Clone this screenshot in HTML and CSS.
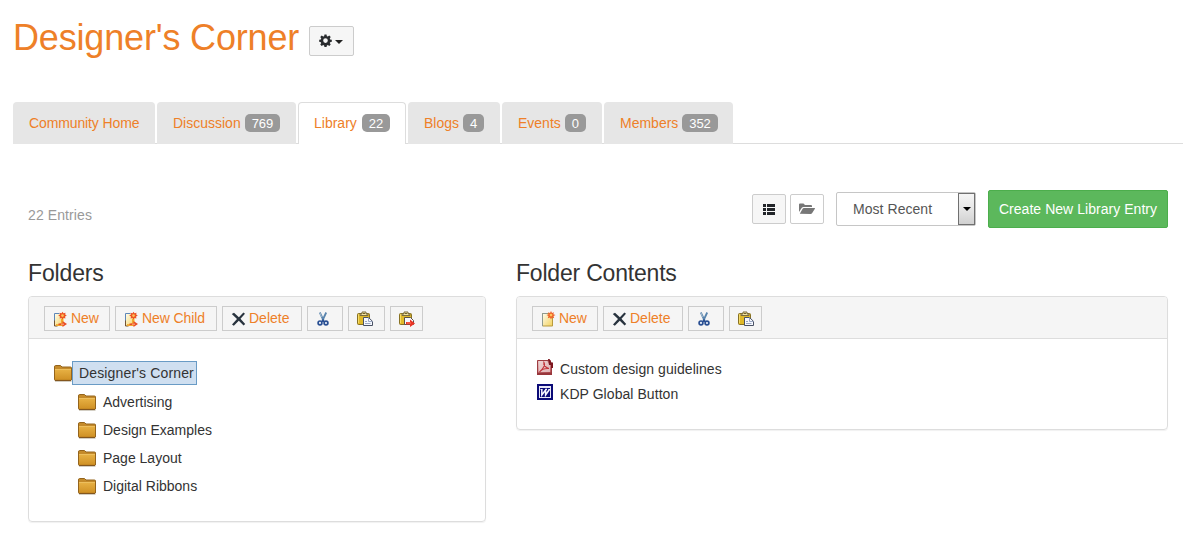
FILE: index.html
```html
<!DOCTYPE html>
<html lang="en">
<head>
<meta charset="utf-8">
<title>Designer's Corner</title>
<link rel="stylesheet" href="styles.css">
</head>
<body>
<svg class="sprite" aria-hidden="true">
  <defs>
    <linearGradient id="gold" x1="0" y1="0" x2="0" y2="1"><stop offset="0" stop-color="#e8b245"/><stop offset="1" stop-color="#cf9024"/></linearGradient>
    <linearGradient id="sheet" x1="0" y1="0" x2="1" y2="1"><stop offset="0" stop-color="#fffdf0"/><stop offset="1" stop-color="#f3d25c"/></linearGradient>
    <linearGradient id="red" x1="0" y1="0" x2="1" y2="1"><stop offset="0" stop-color="#eccccc"/><stop offset="1" stop-color="#b5484d"/></linearGradient>
  </defs>
  <symbol id="folder" viewBox="0 0 18 17">
    <path d="M1 16.300h16.500" stroke="#c9c2b4"/>
    <path d="M.5 14.500V2Q.5.500 1.500.500h5l1.500 1.500h8.500Q17.500 2 17.500 3v12h-17z" fill="#c48a2a" stroke="#94641c"/>
    <path d="M1 4h16v11H1z" fill="url(#gold)"/>
    <path d="M1 4.500h16" stroke="#edbf5e"/>
    <path d="M1 15.400h16" stroke="#7c4d12"/>
  </symbol>
  <symbol id="new-doc" viewBox="0 0 16 16">
    <path d="M2.500 2.500h7L12.500 6v9h-10z" fill="url(#sheet)" stroke="#b99b3c"/>
    <path d="M2.500 15V2.500h5" fill="none" stroke="#8e9a91"/>
    <path d="M11 0l1 2 2-.8-.7 2L15.500 4l-2 1 .7 2.200-2.200-.7L11 8.500l-1-2-2.200.7.7-2.200-2-1 2.200-.8-.7-2L10 2z" fill="#ee6127"/>
    <circle cx="11" cy="4.100" r="1.400" fill="#ffc35b"/>
  </symbol>
  <symbol id="new-folder" viewBox="0 0 16 16">
    <path d="M2.500 2.500h7L12 6v9H2.500z" fill="url(#sheet)"/>
    <path d="M2.500 11V2.500h5" fill="none" stroke="#5d86b8"/>
    <path d="M2.500 9.500v5.500h3" fill="none" stroke="#705232"/>
    <path d="M4 13q3 1 5-1v-4l2-1v8H4z" fill="#f2a72d"/>
    <path d="M10.500.800l1 1.500 2-.5-.3 1.800 1.600 1-1.700 1 .3 1.800-1.900-.5-1 1.600-1-1.600-1.900.5.400-1.800-1.800-1 1.800-1-.4-1.800 1.900.5z" fill="#ed5526"/>
    <circle cx="10.500" cy="4.600" r="1.300" fill="#ffc457"/>
    <path d="M6.500 12.500h4V10l4.500 3-4.500 3v-2h-4z" fill="#e84c25"/>
    <path d="M9 13.200h3" stroke="#ffb27f"/>
  </symbol>
  <symbol id="delete" viewBox="0 0 16 16">
    <path d="M.8 3l2.200-1.200 4.900 4.500L12.400 1.500 14 2.800 9.500 7.800l4.700 5.200-1.600 1.500L7.800 9.800 2.800 14.800 1 13.400 6 8z" fill="#28333e"/>
  </symbol>
  <symbol id="cut" viewBox="0 0 16 16">
    <path d="M4.800 1.500l4 8.500M11.200 1.500L7.200 10" stroke="#5984ad" stroke-width="1.800" fill="none"/>
    <path d="M5 2l1.500 4" stroke="#a7bdd0"/>
    <circle cx="5" cy="11.900" r="1.900" fill="#eef3fa" stroke="#294f93" stroke-width="1.700"/>
    <circle cx="11" cy="12" r="1.900" fill="#eef3fa" stroke="#294f93" stroke-width="1.700"/>
    <path d="M7 8.500h2V11H7z" fill="#294f93"/>
  </symbol>
  <symbol id="clip" viewBox="0 0 16 16">
    <rect x=".5" y="2.500" width="12" height="11" rx="1" fill="#e0b929" stroke="#877123"/>
    <path d="M1.500 12V3.500h2" stroke="#f5db68" fill="none"/>
    <path d="M3 4.500V3h2V1h4v2h2v1.500z" fill="#f4e6a4" stroke="#786b3f"/>
    <path d="M6 2.500h2" stroke="#746228"/>
  </symbol>
  <symbol id="paste" viewBox="0 0 16 16">
    <use href="#clip"/>
    <path d="M6.500 6.500h5l4 3.800v4.200h-9z" fill="#f5f8ff" stroke="#4a5264"/>
    <path d="M11.500 6.500v4h4M8 10.500h2M8 12.500h5.500" fill="none" stroke="#9aa7c2"/>
  </symbol>
  <symbol id="paste-child" viewBox="0 0 16 16">
    <use href="#clip"/>
    <path d="M5.500 6.500h6l3 3v4h-9z" fill="#f5f8ff" stroke="#5c5146"/>
    <path d="M7 11h4V8.500l5 4-5 3.500v-2.500H7z" fill="#e93425"/>
    <path d="M8 12h4" stroke="#ff795d"/>
  </symbol>
  <symbol id="pdf" viewBox="0 0 16 16">
    <path d="M0 1h14v15H0z" fill="url(#red)"/>
    <path d="M.5 1.500h11l3 3v11H.5z" fill="none" stroke="#9e3d42"/>
    <path d="M0 13.500h15V16H0z" fill="#98363b"/>
    <path d="M2 2h8l3 4v7H2z" fill="#f0dcdc" fill-opacity=".7"/>
    <path d="M6.500 2.500q2 3 .2 5.500-1.700 3-4.200 5 3-4 9.500-3.500-4-.8-5.500-5" fill="none" stroke="#c2333a" stroke-width="1.100"/>
    <path d="M11 0h1.500l2 3.500H16V9h-2V6h-2z" fill="#7d171f"/>
  </symbol>
  <symbol id="word" viewBox="0 0 16 16">
    <path d="M0 0h16v16H0z" fill="#0b0b78"/>
    <path d="M2 2h12v2H2zM2 4h1v9H2zM13 4h1v9h-1zM2 13h12v1H2z" fill="#e8e8f6"/>
    <path d="M3.500 5.500h2M8 5.500h2M11.500 5.500h2" stroke="#f5f5ff"/>
    <path d="M4.800 5.500v5.500L8.600 6v5L12.400 5.500" fill="none" stroke="#f5f5ff" stroke-width="1.500"/>
  </symbol>
</svg>

<main class="page">
  <header class="title-row">
    <h1 class="title">Designer's Corner</h1>
    <button class="settings" aria-label="Settings">
      <svg width="13" height="13" viewBox="0 0 14 14"><path fill="#292b2e" fill-rule="evenodd" d="M5.900.500h2.200l.4 1.800 1 .4 1.600-1 1.500 1.500-1 1.600.4 1 1.800.4v2.200l-1.800.4-.4 1 1 1.600-1.500 1.500-1.600-1-1 .4-.4 1.800H5.900l-.4-1.800-1-.4-1.600 1-1.500-1.500 1-1.600-.4-1L.2 8.400V6.200L2 5.800l.4-1-1-1.600 1.500-1.500 1.600 1 1-.4zM7 4.600a2.500 2.500 0 1 0 0 5 2.500 2.500 0 0 0 0-5z"/></svg>
      <span class="caret"></span>
    </button>
  </header>

  <nav class="tabs">
    <a class="tab tab-home">Community Home</a>
    <a class="tab tab-discussion">Discussion<span class="badge">769</span></a>
    <a class="tab tab-library active">Library<span class="badge">22</span></a>
    <a class="tab tab-blogs">Blogs<span class="badge">4</span></a>
    <a class="tab tab-events">Events<span class="badge">0</span></a>
    <a class="tab tab-members">Members<span class="badge">352</span></a>
  </nav>

  <section class="controls">
    <span class="count">22 Entries</span>
    <button class="view view-on" aria-label="List view"><svg width="12" height="11" viewBox="0 0 12 11"><path fill="#222529" d="M0 0h3v3H0zM4 0h8v3H4zM0 4h3v3H0zM4 4h8v3H4zM0 8h3v3H0zM4 8h8v3H4z"/></svg></button>
    <button class="view" aria-label="Folder view"><svg width="16" height="12" viewBox="0 0 16 12"><path fill="#777" d="M0 9V1.500Q0 .5 1 .5h3.500l1.500 1.500h6q1 0 1 1v1H4.500q-1 0-1.700.8zM.8 10.800L3.500 6q.5-1 1.500-1h10.500q.8 0 .4.800L13.200 10q-.6 1-1.600 1z"/></svg></button>
    <div class="select"><span class="select-text">Most Recent</span><span class="select-arrow"><i class="caret"></i></span></div>
    <button class="create">Create New Library Entry</button>
  </section>

  <div class="columns">
    <section class="folders">
      <h2 class="heading">Folders</h2>
      <div class="panel panel-folders">
        <div class="toolbar">
          <button class="tool w-new"><svg class="ico"><use href="#new-folder"/></svg><span class="label">New</span></button>
          <button class="tool w-child"><svg class="ico"><use href="#new-folder"/></svg><span class="label">New Child</span></button>
          <button class="tool w-delete"><svg class="ico"><use href="#delete"/></svg><span class="label">Delete</span></button>
          <button class="tool w-cut" aria-label="Cut"><svg class="ico"><use href="#cut"/></svg></button>
          <button class="tool w-paste" aria-label="Paste"><svg class="ico"><use href="#paste"/></svg></button>
          <button class="tool w-last" aria-label="Paste as child"><svg class="ico"><use href="#paste-child"/></svg></button>
        </div>
        <div class="tree">
          <div class="root"><svg class="folder"><use href="#folder"/></svg><span class="selected">Designer's Corner</span></div>
          <div class="node"><svg class="folder"><use href="#folder"/></svg>Advertising</div>
          <div class="node"><svg class="folder"><use href="#folder"/></svg>Design Examples</div>
          <div class="node"><svg class="folder"><use href="#folder"/></svg>Page Layout</div>
          <div class="node"><svg class="folder"><use href="#folder"/></svg>Digital Ribbons</div>
        </div>
      </div>
    </section>
    <section class="contents">
      <h2 class="heading heading-contents">Folder Contents</h2>
      <div class="panel panel-contents">
        <div class="toolbar">
          <button class="tool w-new"><svg class="ico"><use href="#new-doc"/></svg><span class="label">New</span></button>
          <button class="tool w-delete"><svg class="ico"><use href="#delete"/></svg><span class="label">Delete</span></button>
          <button class="tool w-cut" aria-label="Cut"><svg class="ico"><use href="#cut"/></svg></button>
          <button class="tool w-last" aria-label="Paste"><svg class="ico"><use href="#paste"/></svg></button>
        </div>
        <div class="files">
          <div class="file"><svg class="ico"><use href="#pdf"/></svg>Custom design guidelines</div>
          <div class="file"><svg class="ico"><use href="#word"/></svg>KDP Global Button</div>
        </div>
      </div>
    </section>
  </div>
</main>
</body>
</html>
```
FILE: styles.css
```css
* { box-sizing: border-box; }
body { margin: 0; background: #fff; color: #333; font: 14px/20px "Liberation Sans", Arial, sans-serif; }
button { margin: 0; font: inherit; }
svg { display: block; flex: none; }
.sprite { position: absolute; width: 0; height: 0; }
.page { width: 1195px; height: 537px; padding: 18px 12px 0 13px; overflow: hidden; }

.title-row { display: flex; height: 84px; }
.title { margin: 0; width: 296px; font-size: 36px; font-weight: 400; line-height: 40px; letter-spacing: -.17px; color: #ee8028; white-space: nowrap; }
.settings { display: flex; align-items: center; justify-content: center; gap: 3px; width: 45px; height: 30px; margin-top: 8px; padding: 0 1px 2px 0; background: #f6f6f6; border: 1px solid #ccc; border-radius: 2px; }
.caret { width: 0; height: 0; margin-top: 3px; border: 4px solid transparent; border-top-color: #222; border-bottom: 0; }

.tabs { display: flex; gap: 2px; height: 42px; border-bottom: 1px solid #ddd; }
.tab { display: flex; align-items: center; gap: 4px; height: 42px; padding: 0 0 1px 16px; background: #e6e6e6; border-radius: 4px 4px 0 0; color: #ee8028; white-space: nowrap; }
.tab.active { gap: 5px; background: #fff; border: 1px solid #ddd; border-bottom: 0; padding-left: 15px; }
.tab-home { width: 142px; letter-spacing: -.12px; }
.tab-discussion { width: 139px; }
.tab-library { width: 108px; }
.tab-blogs { width: 92px; }
.tab-events { width: 100px; }
.tab-members { width: 129px; }
.badge { height: 18px; padding: 1px 7px 0; border-radius: 5px; background: #999; color: #fff; font-size: 13px; line-height: 18px; letter-spacing: -.1px; }

.controls { display: flex; align-items: center; height: 38px; margin: 46px 15px 0; }
.count { margin: 12px auto 0 0; color: #999; letter-spacing: .1px; }
.view { display: flex; align-items: center; justify-content: center; width: 34px; height: 30px; margin-right: 4px; padding: 0; background: #fff; border: 1px solid #ccc; border-radius: 2px; }
.view-on { background: #f6f6f6; }
.select { display: flex; justify-content: space-between; width: 140px; height: 34px; margin: 0 12px 0 8px; border: 1px solid #c6c6c6; border-radius: 2px; }
.select-text { padding-left: 16px; line-height: 33px; color: #555; font-size: 14px; letter-spacing: .05px; }
.select-arrow { display: flex; align-items: center; justify-content: center; width: 17px; border: 1px solid #707070; background: linear-gradient(#f5f5f5, #e6e6e6 50%, #d0d0d0); }
.select-arrow .caret { margin: 0; border-top-color: #000; }
.create { width: 180px; height: 38px; padding: 0; border: 1px solid #4cae4c; border-radius: 2px; background: #5cb85c; color: #fff; letter-spacing: .04px; white-space: nowrap; }

.columns { display: flex; gap: 30px; margin: 30px 14px 0 15px; }
.folders { width: 458px; }
.contents { width: 652px; }
.heading { margin: 0 0 8px; font-size: 23px; font-weight: 400; line-height: 30px; letter-spacing: -.15px; color: #333; }
.heading-contents { letter-spacing: -.2px; }
.panel { border: 1px solid #ddd; border-radius: 4px; box-shadow: 0 1px 1px rgba(0, 0, 0, .06); }
.panel-folders { height: 226px; }
.panel-contents { height: 134px; }
.toolbar { display: flex; gap: 5px; height: 42px; padding: 9px 15px; background: #f5f5f5; border-bottom: 1px solid #ddd; border-radius: 3px 3px 0 0; }
.tool { display: flex; align-items: center; gap: 3px; height: 25px; padding: 0 0 0 7px; border: 1px solid #ccc; background: #f5f5f5; color: #ee8028; white-space: nowrap; }
.label { padding-bottom: 2px; letter-spacing: -.1px; }
.w-new { width: 66px; }
.w-child { width: 102px; }
.w-delete { width: 80px; padding-left: 8px; gap: 2px; }
.w-delete .label { letter-spacing: 0; }
.w-cut { width: 36px; }
.w-paste { width: 37px; padding-left: 8px; }
.w-last { width: 33px; padding-left: 8px; }
.ico { width: 16px; height: 16px; }
.tree { padding: 22px 0 0 25px; }
.root { display: flex; align-items: center; height: 24px; margin-bottom: 3px; }
.selected { width: 125px; height: 24px; padding-left: 6px; border: 1px solid #699bc5; background: #cfdff0; line-height: 22px; letter-spacing: .15px; white-space: nowrap; }
.folder { width: 18px; height: 17px; }
.node { display: flex; align-items: center; gap: 7px; height: 28px; padding-left: 24px; }
.files { padding: 17px 0 0 20px; }
.file { display: flex; align-items: center; gap: 7px; height: 25px; letter-spacing: .06px; }
.file .ico { margin-bottom: 3px; }
```
